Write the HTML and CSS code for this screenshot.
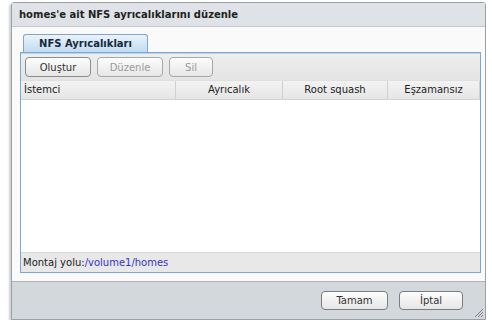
FILE: index.html
```html
<!DOCTYPE html>
<html lang="tr">
<head>
    <meta charset="UTF-8">
    <title>NFS ayrıcalıkları</title>
    <link rel="stylesheet" href="styles.css">
</head>
<body>
    <div class="window">
        <div class="window-title">homes'e ait NFS ayrıcalıklarını düzenle</div>
        <div class="window-body">
            <div class="tabs">
                <div class="tab">NFS Ayrıcalıkları</div>
            </div>
            <div class="panel">
                <div class="toolbar">
                    <button class="btn">Oluştur</button>
                    <button class="btn" disabled>Düzenle</button>
                    <button class="btn btn-small" disabled>Sil</button>
                </div>
                <div class="grid-head">
                    <div class="col col-left">İstemci</div>
                    <div class="col">Ayrıcalık</div>
                    <div class="col">Root squash</div>
                    <div class="col">Eşzamansız</div>
                </div>
                <div class="grid-body"></div>
                <div class="mount">Montaj yolu:<span class="mount-path">/volume1/homes</span></div>
            </div>
        </div>
        <div class="window-footer">
            <button class="btn btn-foot">Tamam</button>
            <button class="btn btn-foot btn-cancel">İptal</button>
            <svg class="grip" width="10" height="10" viewBox="0 0 10 10">
                <path d="M1 9 L9 1 M4 9 L9 4 M7 9 L9 7" stroke="#7b8086" stroke-width="1" fill="none"/>
            </svg>
        </div>
    </div>
</body>
</html>
```

FILE: styles.css
```css
body {
    margin: 0;
    background: #fff;
    font-family: "DejaVu Sans", Verdana, sans-serif;
    font-size: 10px;
    color: #222;
}
.window {
    position: relative;
    margin: 2px 6px 0 11px;
    height: 316px;
    border: 1px solid #9aa0a5;
    border-radius: 3px 3px 0 0;
    box-shadow: -2px 2px 2px rgba(0, 0, 0, 0.18);
    display: flex;
    flex-direction: column;
    background: #fafafa;
}
.window-title {
    height: 23px;
    line-height: 24px;
    padding-left: 7px;
    background: #dfe3e7;
    border-bottom: 1px solid #c3c8cc;
    font-size: 10px;
    font-weight: bold;
    color: #222;
}
.window-body {
    flex: 1;
    padding: 7px 4px 8px 8px;
    display: flex;
    flex-direction: column;
}
.tabs {
    display: flex;
    padding-left: 3px;
}
.tab {
    width: 123px;
    height: 17px;
    line-height: 18px;
    text-align: center;
    border: 1px solid #79a9d3;
    border-bottom: none;
    border-radius: 3px 3px 0 0;
    background: linear-gradient(#eaf3fb, #c2dbf1);
    font-size: 10px;
    font-weight: bold;
    color: #15283f;
}
.panel {
    flex: 1;
    border: 1px solid #79a9d3;
    display: flex;
    flex-direction: column;
    background: #fff;
}
.toolbar {
    height: 27px;
    display: flex;
    align-items: center;
    gap: 6px;
    padding-left: 4px;
    background: linear-gradient(#eeeeee, #e4e4e4);
    border-top: 1px solid #bcd3e8;
    box-sizing: border-box;
}
.btn {
    height: 20px;
    width: 66px;
    padding: 0;
    border: 1px solid #8c8c8c;
    border-radius: 4px;
    background: linear-gradient(#fdfdfd, #e6e6e6);
    font-family: "DejaVu Sans", Verdana, sans-serif;
    font-size: 10px;
    color: #333;
}
.btn:disabled {
    color: #9a9a9a;
    border-color: #a8a8a8;
}
.btn-small {
    width: 44px;
}
.grid-head {
    display: grid;
    grid-template-columns: 155px 107px 105px 1fr;
    height: 18px;
    background: linear-gradient(#f3f3f3, #e5e5e5);
    border-top: 1px solid #e0e0e0;
    border-bottom: 1px solid #d2d2d2;
}
.col {
    line-height: 18px;
    text-align: center;
    border-right: 1px solid #d0d0d0;
    color: #222;
}
.col-left {
    text-align: left;
    padding-left: 3px;
}
.grid-body {
    flex: 1;
    background: #fff;
}
.mount {
    height: 19px;
    line-height: 19px;
    padding-left: 2px;
    background: #e8e8e8;
    border-top: 1px solid #d8d8d8;
    color: #222;
}
.mount-path {
    color: #3434c8;
}
.window-footer {
    position: relative;
    height: 37px;
    background: #d3d8dc;
    border-top: 1px solid #aeb3b7;
    display: flex;
    align-items: center;
    justify-content: flex-end;
    gap: 11px;
    padding-right: 22px;
}
.btn-foot {
    width: 67px;
    height: 19px;
    border-color: #7a7d80;
}
.btn-cancel {
    width: 64px;
}
.grip {
    position: absolute;
    right: 1px;
    bottom: 1px;
}
```
